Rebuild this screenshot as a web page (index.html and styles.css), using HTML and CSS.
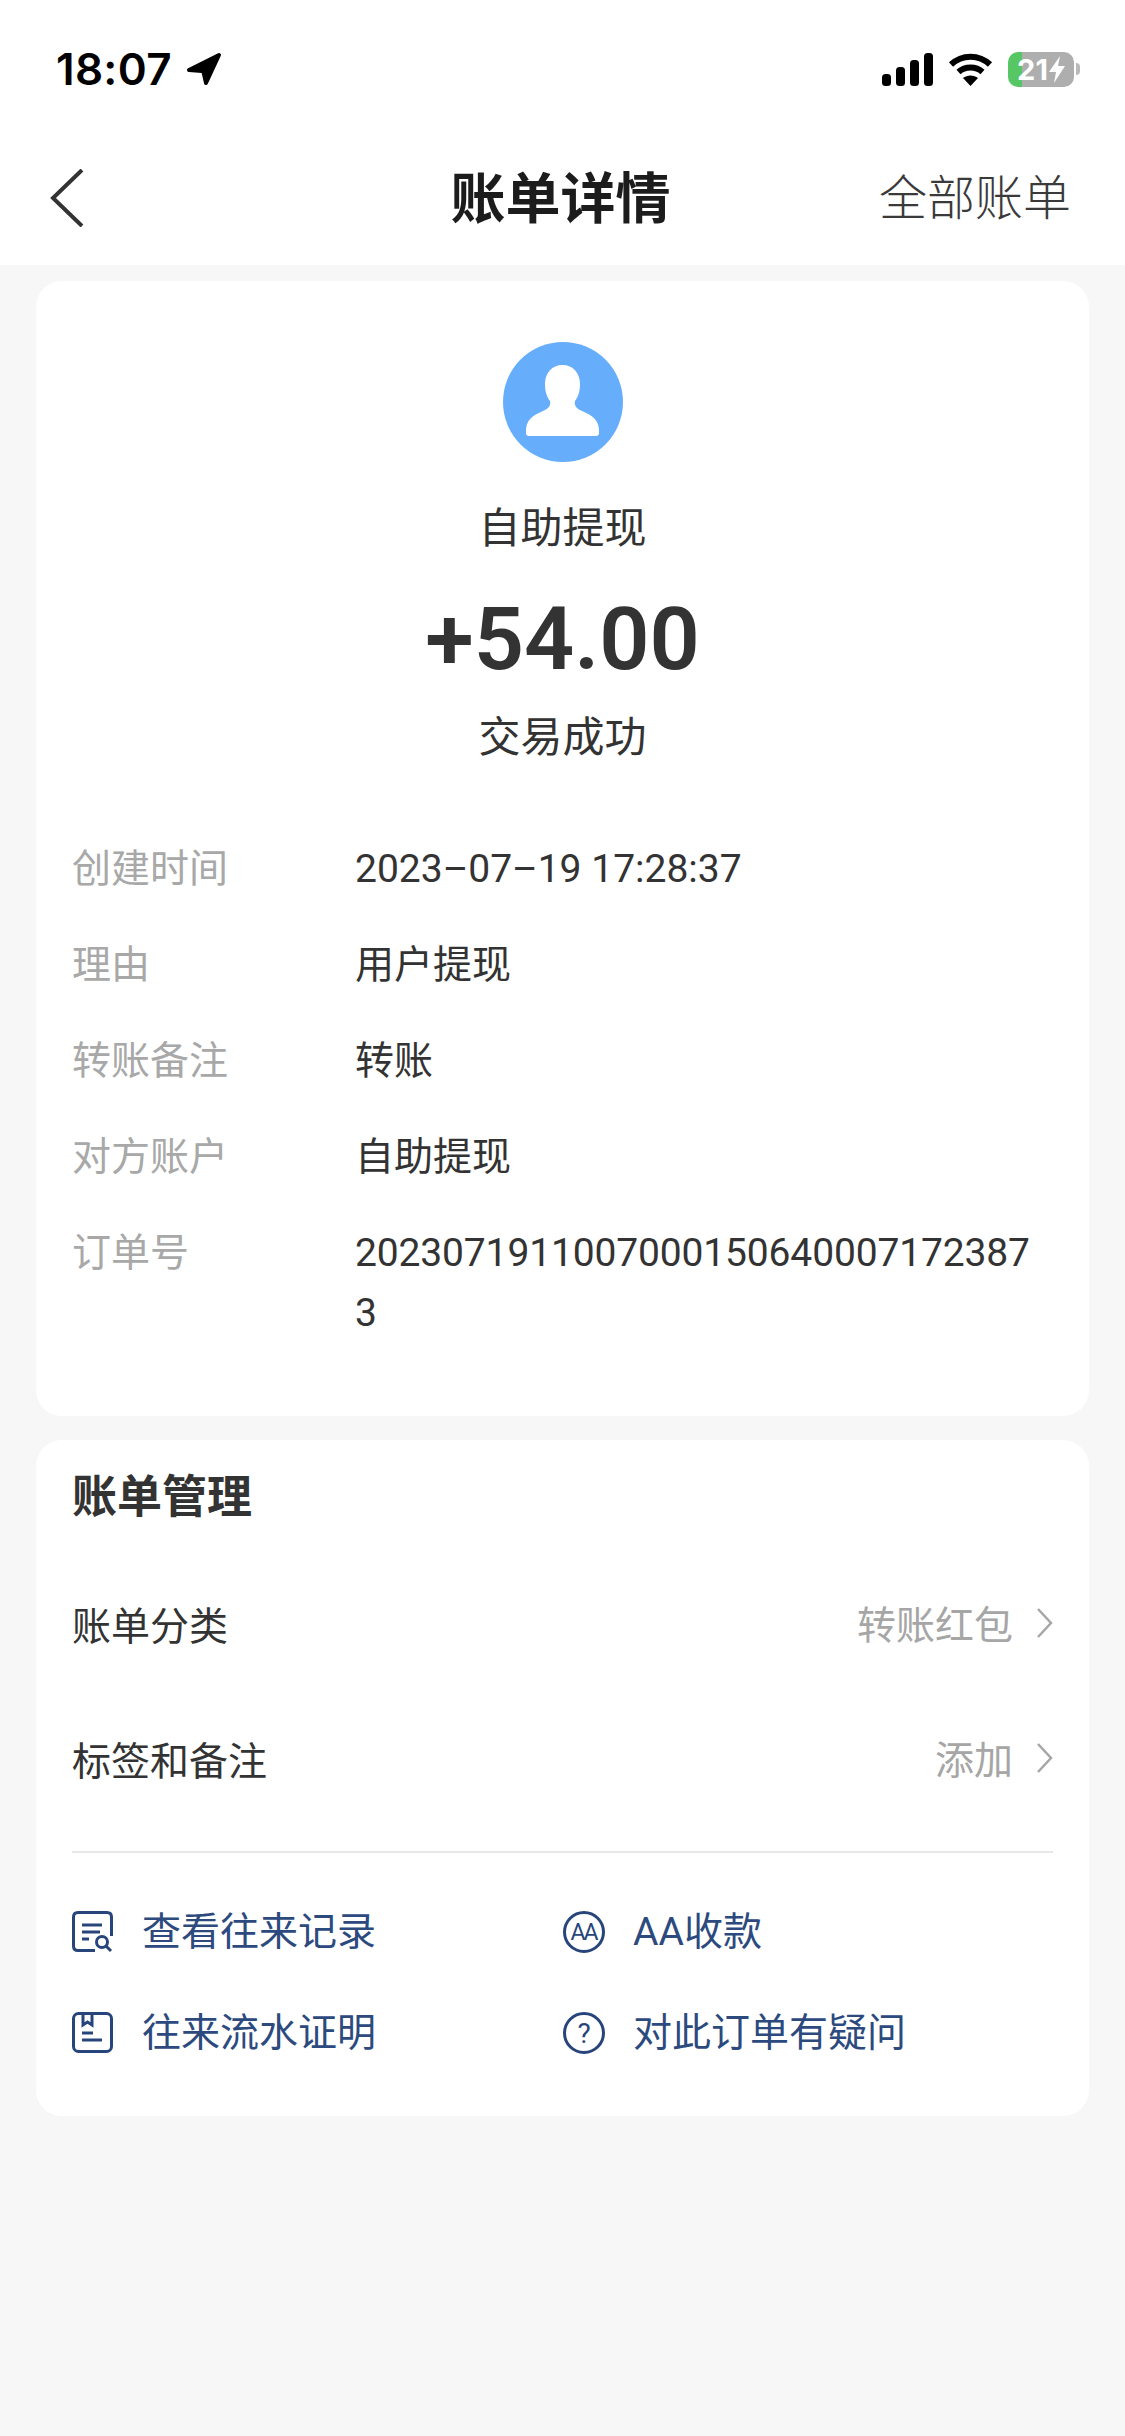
FILE: index.html
```html
<!DOCTYPE html>
<html lang="zh-CN">
<head>
    <meta charset="UTF-8">
    <meta name="viewport" content="width=device-width, initial-scale=1.0">
    <title>账单详情</title>
    <link rel="stylesheet" href="styles.css">
</head>
<body>
    <header class="top">
        <div class="status-bar">
            <div class="status-time">
                <span>18:07</span>
                <svg class="icon-location" width="36" height="34" viewBox="0 0 36 34">
                    <path d="M33 3 L3 18 L16 19 Q17 19 17.500 20 L20 31 Z" fill="#000" stroke="#000" stroke-width="4" stroke-linejoin="round"/>
                </svg>
            </div>
            <div class="status-icons">
                <svg width="51" height="33" viewBox="0 0 51 33">
                    <rect x="0" y="21" width="9" height="12" rx="3.500"/>
                    <rect x="14" y="14" width="9" height="19" rx="3.500"/>
                    <rect x="28" y="7" width="9" height="26" rx="3.500"/>
                    <rect x="42" y="0" width="9" height="33" rx="3.500"/>
                </svg>
                <svg width="45" height="33" viewBox="0 0 45 33">
                    <path d="M3 11.500 C14 1 31 1 42 11.500" fill="none" stroke="#000" stroke-width="6"/>
                    <path d="M10.500 19 C17 13 28 13 34.500 19" fill="none" stroke="#000" stroke-width="6"/>
                    <path d="M22.500 33 L15 25 C19 21.500 26 21.500 30 25 Z" fill="#000"/>
                </svg>
                <div class="battery-wrap">
                    <div class="battery">
                        <span>21</span>
                        <svg width="16" height="27" viewBox="0 0 16 27">
                            <path d="M11 0 L0 16 H7 L5 27 L16 10 H9 Z" fill="#fff"/>
                        </svg>
                    </div>
                    <div class="battery-nub"></div>
                </div>
            </div>
        </div>
        <nav class="nav-bar">
            <svg class="nav-back" width="34" height="58" viewBox="0 0 34 58">
                <path d="M32 1 L3 29 L32 57" fill="none" stroke="#333" stroke-width="4"/>
            </svg>
            <h1 class="nav-title">账单详情</h1>
            <a class="nav-link">全部账单</a>
        </nav>
    </header>

    <main class="page">
        <section class="card card-detail">
            <svg class="avatar" width="120" height="120" viewBox="0 0 120 120">
                <circle cx="60" cy="60" r="60" fill="#66aefc"/>
                <path d="M59.500 23 C49 23 42 31 42 42 C42 50 44 55 47 59 C48 63 46 66 42 68 C34 72 24 75 23 87 V91 Q23 94 26 94 H93 Q96 94 96 91 V87 C95 75 85 72 77 68 C73 66 71 63 72 59 C75 55 77 50 77 42 C77 31 70 23 59.500 23 Z" fill="#fff"/>
            </svg>
            <div class="payee">自助提现</div>
            <div class="amount">+54.00</div>
            <div class="trade-state">交易成功</div>

            <dl class="info">
                <div class="info-row">
                    <dt>创建时间</dt>
                    <dd>2023–07–19 17:28:37</dd>
                </div>
                <div class="info-row">
                    <dt>理由</dt>
                    <dd>用户提现</dd>
                </div>
                <div class="info-row">
                    <dt>转账备注</dt>
                    <dd>转账</dd>
                </div>
                <div class="info-row">
                    <dt>对方账户</dt>
                    <dd>自助提现</dd>
                </div>
                <div class="info-row">
                    <dt>订单号</dt>
                    <dd class="info-number">20230719110070001506400071723873</dd>
                </div>
            </dl>
        </section>

        <section class="card card-manage">
            <h2 class="manage-title">账单管理</h2>
            <div class="manage-row">
                <span>账单分类</span>
                <div class="manage-value">
                    <span>转账红包</span>
                    <svg width="16" height="30" viewBox="0 0 16 30"><path d="M1 1 L14 15 L1 29" fill="none" stroke="#a6a6a6" stroke-width="2.500"/></svg>
                </div>
            </div>
            <div class="manage-row">
                <span>标签和备注</span>
                <div class="manage-value">
                    <span>添加</span>
                    <svg width="16" height="30" viewBox="0 0 16 30"><path d="M1 1 L14 15 L1 29" fill="none" stroke="#a6a6a6" stroke-width="2.500"/></svg>
                </div>
            </div>
            <div class="divider"></div>
            <div class="links">
                <a class="link">
                    <svg class="link-icon" width="42" height="42" viewBox="0 0 42 42">
                        <path d="M23 39.500 H6 Q1.500 39.500 1.500 35 V6 Q1.500 1.500 6 1.500 H35 Q39.500 1.500 39.500 6 V25" fill="none" stroke="#27457a" stroke-width="3"/>
                        <path d="M10 14 H30 M10 21 H28 M10 28 H17" fill="none" stroke="#27457a" stroke-width="3"/>
                        <circle cx="30" cy="31" r="5.500" fill="none" stroke="#27457a" stroke-width="3"/>
                        <path d="M34 35 L39 40" stroke="#27457a" stroke-width="3"/>
                    </svg>
                    <span class="link-text">查看往来记录</span>
                </a>
                <a class="link">
                    <svg class="link-icon" width="42" height="42" viewBox="0 0 42 42">
                        <circle cx="21" cy="21" r="19.500" fill="none" stroke="#27457a" stroke-width="3"/>
                        <text class="aa-mark" x="20.500" y="29" text-anchor="middle">AA</text>
                    </svg>
                    <span class="link-text">AA收款</span>
                </a>
                <a class="link">
                    <svg class="link-icon" width="42" height="42" viewBox="0 0 42 42">
                        <rect x="1.500" y="1.500" width="38" height="38" rx="5" fill="none" stroke="#27457a" stroke-width="3"/>
                        <path d="M11 2 V13 L15.500 10 L20 13 V2" fill="none" stroke="#27457a" stroke-width="3"/>
                        <path d="M10 21 H21 M10 28 H30" fill="none" stroke="#27457a" stroke-width="3"/>
                    </svg>
                    <span class="link-text">往来流水证明</span>
                </a>
                <a class="link">
                    <svg class="link-icon" width="42" height="42" viewBox="0 0 42 42">
                        <circle cx="21" cy="21" r="19.500" fill="none" stroke="#27457a" stroke-width="3"/>
                        <text class="help-mark" x="21" y="31" text-anchor="middle">?</text>
                    </svg>
                    <span class="link-text">对此订单有疑问</span>
                </a>
            </div>
        </section>
    </main>
</body>
</html>
```

FILE: styles.css
```css
* {
    box-sizing: border-box;
}
html, body {
    margin: 0;
    height: 100%;
}
body {
    font-family: Roboto, "Noto Sans CJK SC", sans-serif;
    font-size: 39px;
    color: #333;
    background-color: #f7f7f7;
}
.top {
    background-color: #fff;
}
.status-bar {
    display: flex;
    justify-content: space-between;
    align-items: center;
    height: 130px;
    padding: 8px 44px 0 56px;
}
.status-time {
    display: flex;
    align-items: center;
    gap: 14px;
    font-family: Inter, sans-serif;
    font-size: 44px;
    font-weight: 600;
    letter-spacing: 0.3px;
    color: #000;
}
.status-icons {
    display: flex;
    align-items: center;
    gap: 15px;
    margin-right: 1px;
}
.battery-wrap {
    display: flex;
    align-items: center;
    gap: 2px;
}
.battery {
    display: flex;
    align-items: center;
    justify-content: center;
    gap: 1px;
    width: 66px;
    height: 35px;
    border-radius: 10px;
    background: linear-gradient(to right, #57c665 14px, #aeaeae 14px);
    color: #fff;
    font-family: Inter, sans-serif;
    font-size: 29px;
    font-weight: 700;
}
.battery-nub {
    width: 4px;
    height: 12px;
    border-radius: 0 4px 4px 0;
    background-color: #b9b9b9;
}
.nav-bar {
    display: grid;
    grid-template-columns: 1fr auto 1fr;
    align-items: center;
    height: 135px;
    padding: 0 54px 0 50px;
}
.nav-title {
    margin: 0 0 7px;
    font-size: 55px;
    font-weight: 700;
    color: #1c1c1c;
}
.nav-link {
    justify-self: end;
    margin-bottom: 7px;
    font-size: 48px;
    font-weight: 300;
    color: #3a3a3a;
}
.page {
    display: flex;
    flex-direction: column;
    gap: 24px;
    padding: 16px 36px 0;
}
.card {
    border-radius: 26px;
    background-color: #fff;
    padding-left: 36px;
    padding-right: 36px;
}
.card-detail {
    display: flex;
    flex-direction: column;
    align-items: center;
    padding-top: 61px;
    padding-bottom: 73px;
}
.avatar {
    display: block;
}
.payee, .trade-state {
    line-height: 60px;
    font-size: 42px;
}
.payee {
    margin-top: 37px;
}
.amount {
    margin-top: 30px;
    height: 100px;
    line-height: 100px;
    font-size: 88px;
    font-weight: 600;
}
.trade-state {
    margin-top: 19px;
}
.info {
    width: 100%;
    margin: 71px 0 0;
    display: flex;
    flex-direction: column;
    gap: 36px;
}
.info-row {
    display: flex;
    line-height: 60px;
}
.info-row dt {
    flex: 0 0 283px;
    color: #a8a8a8;
}
.info-row dd {
    margin: 0;
    width: 680px;
    word-break: break-all;
}
.info-number {
    letter-spacing: -0.15px;
}
.card-manage {
    padding-top: 28px;
    padding-bottom: 53px;
}
.manage-title {
    margin: 0 0 28px;
    line-height: 60px;
    font-size: 45px;
    font-weight: 700;
}
.manage-row {
    display: flex;
    justify-content: space-between;
    align-items: center;
    height: 135px;
    padding-bottom: 1px;
}
.manage-value {
    display: flex;
    align-items: center;
    gap: 24px;
    color: #a6a6a6;
}
.manage-value span {
    margin-bottom: 3px;
}
.divider {
    height: 2px;
    margin-top: 25px;
    background-color: #e8e8e8;
}
.links {
    display: grid;
    grid-template-columns: 491px 1fr;
    row-gap: 41px;
    margin-top: 49px;
}
.link {
    display: flex;
    align-items: center;
    height: 60px;
    color: #2c4a7e;
}
.link-icon {
    flex: none;
    margin-right: 29px;
}
.link-text {
    margin-bottom: 8px;
    margin-left: -1px;
}
.aa-mark {
    font-family: Roboto, sans-serif;
    font-size: 23px;
    letter-spacing: -2px;
    fill: #27457a;
}
.help-mark {
    font-family: Roboto, sans-serif;
    font-size: 28px;
    fill: #27457a;
}
```
